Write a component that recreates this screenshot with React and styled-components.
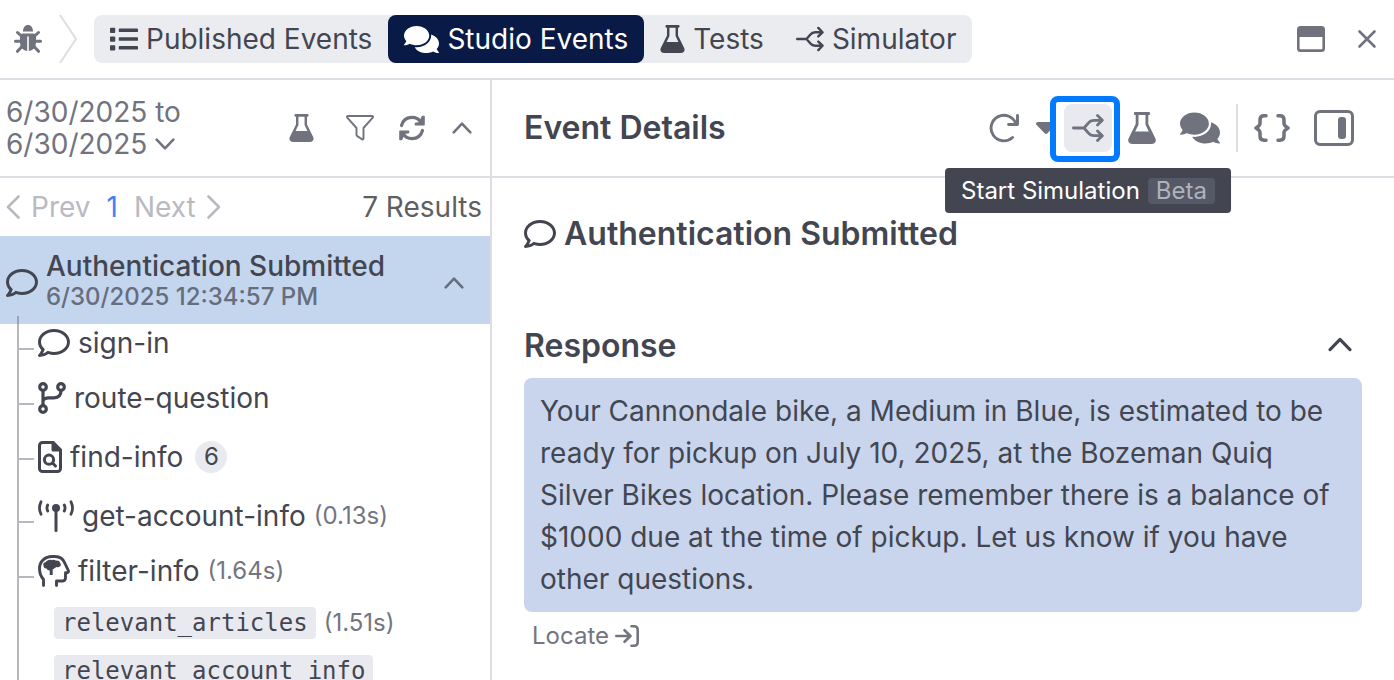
import React, { useState } from 'react';
import styled, { createGlobalStyle } from 'styled-components';
import { FaComments, FaList, FaRegComment } from 'react-icons/fa';

const GlobalStyle = createGlobalStyle`
  * {
    box-sizing: border-box;
  }
  body {
    margin: 0;
    background: #ffffff;
    color: #434651;
    font-family: Inter, "Liberation Sans", sans-serif;
    font-size: 28px;
    line-height: 32px;
  }
  button {
    font: inherit;
    color: inherit;
    background: none;
    border: none;
    padding: 0;
    margin: 0;
    cursor: pointer;
  }
  svg {
    display: block;
    flex: none;
  }
  h1, h2, h3, p, ul {
    margin: 0;
    padding: 0;
  }
`;

const Page = styled.div`
  display: flex;
  flex-direction: column;
  height: 100vh;
  overflow: hidden;
`;

const TopBar = styled.header`
  display: flex;
  align-items: center;
  flex: none;
  height: 80px;
  padding: 0 17px 0 14px;
  border-bottom: 2px solid #dddde3;
  color: #70737e;
`;

const Tabs = styled.nav`
  display: flex;
  margin-left: 16px;
  background: #ebecf0;
  border-radius: 8px;
`;

const Tab = styled.button`
  display: flex;
  align-items: center;
  gap: 8px;
  height: 48px;
  padding: 0 16px;
  border-radius: 8px;
  white-space: nowrap;
  && {
    color: ${({ $active }) => ($active ? '#ffffff' : '#434651')};
    background: ${({ $active }) => ($active ? '#0a1a46' : 'transparent')};
  }
`;

const WindowActions = styled.div`
  display: flex;
  align-items: center;
  gap: 32px;
  margin-left: auto;
`;

const Main = styled.main`
  display: flex;
  flex: 1;
  min-height: 0;
`;

const Sidebar = styled.aside`
  flex: none;
  width: 492px;
  border-right: 2px solid #dddde3;
  overflow: hidden;
`;

const FilterBar = styled.div`
  display: flex;
  align-items: center;
  height: 98px;
  padding: 0 16px 0 6px;
  border-bottom: 2px solid #dddde3;
  color: #70737e;
`;

const DateRange = styled.button`
  width: 200px;
  text-align: left;
  svg {
    display: inline-block;
    margin-bottom: 4px;
    vertical-align: middle;
  }
`;

const FilterActions = styled.div`
  display: flex;
  align-items: center;
  gap: 24px;
  margin-left: auto;
  button:first-child {
    margin-right: 8px;
  }
  button:last-child {
    padding: 0 2px;
  }
`;

const Pager = styled.div`
  display: flex;
  align-items: center;
  gap: 16px;
  height: 58px;
  padding: 0 8px 0 6px;
  color: #b9bac1;
`;

const PageButton = styled.button`
  display: flex;
  align-items: center;
  gap: 11px;
`;

const CurrentPage = styled.span`
  color: #4a7df8;
`;

const Results = styled.span`
  margin-left: auto;
  color: #5f5f62;
`;

const EventRow = styled.div`
  display: flex;
  align-items: center;
  gap: 8px;
  height: 88px;
  padding: 2px 26px 0 6px;
  background: #c4d6ee;
  > button {
    margin: 4px 0 0 auto;
    color: #666d7b;
  }
  > svg {
    margin-top: 4px;
  }
`;

const EventName = styled.div`
  font-weight: 500;
`;

const EventTime = styled.div`
  font-size: 24px;
  font-weight: 500;
  line-height: 30px;
  color: #666d7b;
`;

const Tree = styled.ul`
  position: relative;
  margin: -8px 0 0 17px;
  list-style: none;
`;

const TreeItem = styled.li`
  display: flex;
  align-items: flex-start;
  padding-bottom: 1px;
  border-left: 2px solid rgba(120, 119, 132, 0.53);
  &::before {
    content: '';
    flex: none;
    width: 15px;
    height: 2px;
    margin: 32px 4px 0 0;
    background: #b8b7bf;
  }
`;

const Step = styled.div`
  display: flex;
  align-items: center;
  gap: 8px;
  height: ${({ $tall }) => ($tall ? 62 : 54)}px;
`;

const Duration = styled.span`
  font-size: 24px;
  color: #73757f;
`;

const Count = styled.span`
  display: flex;
  align-items: center;
  justify-content: center;
  width: 32px;
  height: 32px;
  margin-left: 4px;
  border-radius: 50%;
  background: #e9eaef;
  font-size: 24px;
`;

const Variables = styled.ul`
  display: flex;
  flex-direction: column;
  gap: 16px;
  padding: 9px 0 0 16px;
  list-style: none;
`;

const Variable = styled.li`
  display: flex;
  align-items: center;
  gap: 8px;
  code {
    height: 32px;
    padding: 0 8px;
    border-radius: 4px;
    background: #e9eaef;
    font-family: "DejaVu Sans Mono", monospace;
    font-size: 24px;
  }
`;

const Details = styled.section`
  flex: 1;
  min-width: 0;
`;

const DetailsBar = styled.div`
  display: flex;
  align-items: center;
  height: 98px;
  padding: 0 40px 0 32px;
  border-bottom: 2px solid #dddde3;
`;

const Title = styled.h1`
  font-size: 32px;
  font-weight: 600;
  line-height: 40px;
`;

const Tools = styled.div`
  display: flex;
  align-items: center;
  height: 48px;
  margin-left: auto;
  color: #70737e;
`;

const ToolButton = styled.button`
  display: flex;
  margin-left: ${({ $space }) => $space || 24}px;
`;

const SimulateSlot = styled.div`
  position: relative;
  margin-left: 8px;
`;

const Ring = styled.span`
  position: absolute;
  top: -8px;
  right: -8px;
  bottom: -10px;
  left: -14px;
  border: 6px solid #007bff;
  border-radius: 8px;
  background: #ffffff;
`;

const SimulateButton = styled.button`
  position: relative;
  display: flex;
  align-items: center;
  justify-content: center;
  width: 48px;
  height: 48px;
  && {
    background: #e9eaef;
  }
  border-radius: 8px;
`;

const Tooltip = styled.div`
  position: absolute;
  top: 64px;
  left: 50%;
  transform: translateX(-50%);
  display: flex;
  align-items: center;
  gap: 8px;
  height: 45px;
  padding: 0 16px;
  border-radius: 4px;
  background: #434651;
  color: #ffffff;
  font-size: 24px;
  white-space: nowrap;
  z-index: 1;
`;

const Beta = styled.span`
  padding: 0 8px;
  border-radius: 4px;
  background: #555866;
  color: #b0b1b9;
  line-height: 26px;
`;

const Divider = styled.span`
  width: 2px;
  height: 48px;
  margin-left: 16px;
  background: #dddde3;
`;

const DetailsBody = styled.div`
  padding: 36px 32px;
`;

const Heading = styled.h2`
  display: flex;
  align-items: center;
  gap: 8px;
  font-size: 32px;
  font-weight: 600;
  line-height: 40px;
`;

const SectionHead = styled.div`
  display: flex;
  align-items: center;
  justify-content: space-between;
  margin-top: 72px;
  padding-right: 10px;
  > button {
    margin-bottom: 4px;
  }
`;

const Message = styled.p`
  margin: 12px 0 8px;
  padding: 12px 16px;
  border-radius: 8px;
  background: #c8d5ec;
  line-height: 42px;
`;

const Locate = styled.button`
  && {
    display: flex;
    align-items: center;
    gap: 6px;
    padding-left: 8px;
    color: #73757f;
    font-size: 24px;
  }
`;

const chevrons = {
  up: { box: '0 0 20 14', d: 'M1.700 11.300L10 2.700L18.300 11.300' },
  down: { box: '0 0 20 14', d: 'M1.700 2.700L10 11.300L18.300 2.700' },
  left: { box: '0 0 14 24', d: 'M12.500 1.500L2 12L12.500 22.500' },
  right: { box: '0 0 14 24', d: 'M1.500 1.500L12 12L1.500 22.500' },
};

const Chevron = ({ dir = 'up', width = 20 }) => {
  const side = dir === 'left' || dir === 'right';
  return (
    <svg width={side ? 14 : width} height={side ? 24 : Math.round(width * 0.7)} viewBox={chevrons[dir].box} fill="none" stroke="currentColor" strokeWidth="2.600" strokeLinecap="round" strokeLinejoin="round">
      <path d={chevrons[dir].d} />
    </svg>
  );
};

const Bug = () => (
  <svg width="28" height="28" viewBox="0 0 28 28" fill="none" stroke="currentColor" strokeWidth="3" strokeLinecap="round">
    <path fill="currentColor" stroke="none" d="M9 6.500C9 2.500 11 0 14 0s5 2.500 5 6.500z" />
    <path fill="currentColor" stroke="none" fillRule="evenodd" d="M9 8.500h10a3 3 0 0 1 3 3V18a8 8 0 0 1-7.200 8V11.500h-1.600V26A8 8 0 0 1 6 18v-6.500a3 3 0 0 1 3-3z" />
    <path d="M1.500 16.200H7M21 16.200H26.500M3.500 7.500L8 11.500M24.500 7.500L20 11.500M3.500 26.300L8 21.500M24.500 26.300L20 21.500" />
  </svg>
);

const BugDivider = () => (
  <svg width="20" height="50" viewBox="0 0 20 50" fill="none" stroke="#dddde3" strokeWidth="2">
    <path d="M2 1 L18 25 L2 49" />
  </svg>
);

const Crumb = styled.div`
  display: flex;
  align-items: center;
  gap: 16px;
`;

const Flask = ({ width = 28, height = 32 }) => (
  <svg width={width} height={height} viewBox="0 0 28 32">
    <path fill="currentColor" fillRule="evenodd" d="M7.200 0h13.600c.8 0 1.200.5 1.200 1.200v.7c0 .7-.4 1.100-1.200 1.100H20.300v9l6.900 13.900c1.700 3.200-.2 6.100-3.700 6.100H4.500c-3.500 0-5.400-2.900-3.700-6.100L7.700 12V3h-.5C6.400 3 6 2.600 6 1.900v-.7C6 .5 6.400 0 7.200 0zM10.500 3v9.700L7.200 19.500h13.600L17.500 12.700V3z" />
  </svg>
);

const Split = ({ size = 32 }) => (
  <svg width={size} height={size} viewBox="0 0 32 32" fill="none" stroke="currentColor" strokeWidth="2.800" strokeLinecap="round" strokeLinejoin="round">
    <path d="M1.400 16H12L16.500 10.800Q18.500 8.300 22 8.300H30M12 16L16.500 21.200Q18.500 23.700 22 23.700H30M25.500 3.400L30.300 8.300L25.500 13.100M25.500 18.900L30.300 23.700L25.500 28.600" />
  </svg>
);

const WindowIcon = () => (
  <svg width="28" height="26" viewBox="0 0 28 26">
    <path fill="currentColor" fillRule="evenodd" d="M3.500 0h21A3.500 3.500 0 0 1 28 3.500v19a3.500 3.500 0 0 1-3.500 3.500h-21A3.500 3.500 0 0 1 0 22.500v-19A3.500 3.500 0 0 1 3.500 0zM2.600 11v11.300c0 .6.4 1 1 1h20.800c.6 0 1-.4 1-1V11z" />
  </svg>
);

const Close = () => (
  <svg width="20" height="20" viewBox="0 0 20 20" stroke="currentColor" strokeWidth="2.600" strokeLinecap="round">
    <path d="M2.500 2.500L17.500 17.500M17.500 2.500L2.500 17.500" />
  </svg>
);

const Funnel = () => (
  <svg width="28" height="28" viewBox="0 0 28 28" fill="none" stroke="currentColor" strokeWidth="1.900" strokeLinejoin="round">
    <path d="M2 2h24c1 0 1.400 1 .7 1.700L17.500 14v10.500c0 .9-.9 1.300-1.600.8l-4.600-3.200c-.5-.3-.8-.7-.8-1.300V14L1.300 3.700C.6 3 1 2 2 2z" />
  </svg>
);

const Sync = () => (
  <svg width="28" height="28" viewBox="0 0 28 28" fill="none" stroke="currentColor" strokeWidth="3.200" strokeLinecap="round" strokeLinejoin="round">
    <path d="M3.500 11.500C5 6.200 9 3.400 14 3.400C18 3.400 21.200 5.300 23 8.500M24.500 16.500C23 21.800 19 24.600 14 24.600C10 24.600 6.800 22.700 5 19.500" />
    <path fill="currentColor" strokeWidth="1.600" d="M26 2.500V10.800H17.500V9.500L21.500 8.800L24.500 2.500zM2 25.500V17.200H10.500V18.500L6.500 19.200L3.500 25.500z" />
  </svg>
);

const Redo = () => (
  <svg width="32" height="32" viewBox="0 0 32 32" fill="none" stroke="currentColor" strokeWidth="2.900" strokeLinecap="round" strokeLinejoin="round">
    <path d="M29.500 3.500V12.500H20.500M28 12A12.800 12.800 0 1 0 24.500 25.500" />
  </svg>
);

const Caret = () => (
  <svg width="20" height="12" viewBox="0 0 20 12">
    <path fill="currentColor" d="M1.800 0h16.400c1.600 0 2.300 1.900 1.200 3L11.400 11.200a2 2 0 0 1-2.800 0L.6 3C-.5 1.900.2 0 1.800 0z" />
  </svg>
);

const Braces = () => (
  <svg width="36" height="28" viewBox="0 0 36 28" fill="none" stroke="currentColor" strokeWidth="3.500" strokeLinecap="round" strokeLinejoin="round">
    <path d="M12 1.800H10C7.500 1.800 6 3.500 6 6V9.500C6 11 5.500 11.700 2 14C5.500 16.300 6 17 6 18.500V22C6 24.500 7.500 26.200 10 26.200H12M24 1.800H26C28.500 1.800 30 3.500 30 6V9.500C30 11 30.500 11.700 34 14C30.500 16.300 30 17 30 18.500V22C30 24.500 28.500 26.200 26 26.200H24" />
  </svg>
);

const SidePanel = () => (
  <svg width="40" height="36" viewBox="0 0 40 36">
    <rect x="1.500" y="1.500" width="37" height="33" rx="4.500" fill="none" stroke="currentColor" strokeWidth="3" />
    <rect x="24" y="7" width="8" height="22" rx="3" fill="currentColor" />
  </svg>
);

const Branch = () => (
  <svg width="28" height="32" viewBox="0 0 28 32" fill="none" stroke="currentColor" strokeWidth="3.200">
    <circle cx="5" cy="5" r="3.300" />
    <circle cx="23" cy="5" r="3.300" />
    <circle cx="5" cy="27" r="3.300" />
    <path d="M5 8.500V23.500M5 18.500C6 16.300 8 15.800 10.500 15.800H16C20.500 15.800 23 13 23 8.500" />
  </svg>
);

const FileSearch = () => (
  <svg width="24" height="32" viewBox="0 0 24 32" fill="none" stroke="currentColor" strokeWidth="3" strokeLinecap="round" strokeLinejoin="round">
    <path d="M4.500 1.500H15L22.500 9V27.500A3 3 0 0 1 19.500 30.500H4.500A3 3 0 0 1 1.500 27.500V4.500A3 3 0 0 1 4.500 1.500z" />
    <path d="M15 1.500V9H22.500z" fill="currentColor" />
    <circle cx="11" cy="18.700" r="4.600" />
    <path d="M14.500 22L17.500 25" />
  </svg>
);

const Antenna = () => (
  <svg width="36" height="32" viewBox="0 0 36 32" fill="none" stroke="currentColor" strokeWidth="2.800" strokeLinecap="round">
    <circle cx="18" cy="8" r="4" fill="currentColor" stroke="none" />
    <path strokeWidth="3" d="M18 9V30.500" />
    <path d="M9.700 5C8.700 7 8.700 9 9.700 11M26.300 5C27.300 7 27.300 9 26.300 11M3 1.800C1 5.900 1 10.100 3 14.200M33 1.800C35 5.900 35 10.100 33 14.200" />
  </svg>
);

const HeadBrain = () => (
  <svg width="32" height="32" viewBox="0 0 32 32" fill="none" stroke="currentColor" strokeWidth="2.900" strokeLinecap="round" strokeLinejoin="round">
    <path d="M5.500 30.500V24.500C2.800 21.500 1.500 18 1.500 13.500C1.500 6.500 7 1.500 14 1.500H17C22 1.500 25.500 4.200 27 8.500L30.300 15.500C30.800 16.700 30.200 17.700 29 17.700H27.500V23A3 3 0 0 1 24.500 26H18.500V30.500" />
    <path fill="currentColor" stroke="none" d="M14 5.200c1.400-.7 3-.5 4 .5 1.800-.5 3.500.4 4 2 1.300 1.100 1.200 2.900-.2 3.900-1 .8-2.300.8-3.300.3l-3.800 2.600V20h-3v-4.500c-1.500 0-2.700-.8-3.200-2-1.800.2-3.200-1.200-3-2.900C4.700 8.800 5.800 7.200 7.700 7 8.500 5.300 12 4 14 5.200z" />
  </svg>
);

const LocateIcon = () => (
  <svg width="24" height="22" viewBox="0 0 24 22" fill="none" stroke="currentColor" strokeWidth="2.600" strokeLinecap="round" strokeLinejoin="round">
    <path d="M1.300 11H15.500M9.500 5.200L15.500 11L9.500 16.800M16.500 1.300H19.500A3.200 3.200 0 0 1 22.700 4.500V17.500A3.200 3.200 0 0 1 19.500 20.700H16.500" />
  </svg>
);

const tabs = [
  { name: 'Published Events', icon: <FaList size={28} /> },
  { name: 'Studio Events', icon: <FaComments size={35} /> },
  { name: 'Tests', icon: <Flask width={25} height={28} /> },
  { name: 'Simulator', icon: <Split size={28} /> },
];

const steps = [
  { name: 'sign-in', icon: <FaRegComment size={32} /> },
  { name: 'route-question', icon: <Branch /> },
  { name: 'find-info', icon: <FileSearch />, count: 6 },
  { name: 'get-account-info', icon: <Antenna />, time: '0.13s' },
  {
    name: 'filter-info',
    icon: <HeadBrain />,
    time: '1.64s',
    variables: [{ name: 'relevant_articles', time: '1.51s' }, { name: 'relevant_account_info' }],
  },
];

const EventList = () => (
  <Sidebar>
    <FilterBar>
      <DateRange>
        6/30/2025 to 6/30/2025 <Chevron dir="down" />
      </DateRange>
      <FilterActions>
        <button aria-label="Test"><Flask width={25} height={28} /></button>
        <button aria-label="Filter"><Funnel /></button>
        <button aria-label="Refresh"><Sync /></button>
        <button aria-label="Collapse all"><Chevron /></button>
      </FilterActions>
    </FilterBar>
    <Pager>
      <PageButton><Chevron dir="left" />Prev</PageButton>
      <CurrentPage>1</CurrentPage>
      <PageButton>Next<Chevron dir="right" /></PageButton>
      <Results>7 Results</Results>
    </Pager>
    <EventRow>
      <FaRegComment size={32} />
      <div>
        <EventName>Authentication Submitted</EventName>
        <EventTime>6/30/2025 12:34:57 PM</EventTime>
      </div>
      <button aria-label="Collapse event"><Chevron /></button>
    </EventRow>
    <Tree>
      {steps.map((step) => (
        <TreeItem key={step.name}>
          <div>
            <Step $tall={step.count}>
              {step.icon}
              <span>{step.name}</span>
              {step.count && <Count>{step.count}</Count>}
              {step.time && <Duration>({step.time})</Duration>}
            </Step>
            {step.variables && (
              <Variables>
                {step.variables.map((item) => (
                  <Variable key={item.name}>
                    <code>{item.name}</code>
                    {item.time && <Duration>({item.time})</Duration>}
                  </Variable>
                ))}
              </Variables>
            )}
          </div>
        </TreeItem>
      ))}
    </Tree>
  </Sidebar>
);

const EventDetails = () => {
  const [open, setOpen] = useState(true);

  return (
    <Details>
      <DetailsBar>
        <Title>Event Details</Title>
        <Tools>
          <ToolButton aria-label="Replay"><Redo /></ToolButton>
          <ToolButton aria-label="Replay options" $space={16}><Caret /></ToolButton>
          <SimulateSlot>
            <Ring />
            <SimulateButton aria-label="Start Simulation"><Split /></SimulateButton>
            <Tooltip role="tooltip">Start Simulation <Beta>Beta</Beta></Tooltip>
          </SimulateSlot>
          <ToolButton aria-label="Create test" $space={16}><Flask /></ToolButton>
          <ToolButton aria-label="Conversation"><FaComments size={40} /></ToolButton>
          <Divider />
          <ToolButton aria-label="View JSON" $space={16}><Braces /></ToolButton>
          <ToolButton aria-label="Toggle panel"><SidePanel /></ToolButton>
        </Tools>
      </DetailsBar>
      <DetailsBody>
        <Heading><FaRegComment size={32} />Authentication Submitted</Heading>
        <SectionHead>
          <Heading>Response</Heading>
          <button aria-label="Toggle response" onClick={() => setOpen(!open)}>
            <Chevron dir={open ? 'up' : 'down'} width={24} />
          </button>
        </SectionHead>
        {open && (
          <Message>
            Your Cannondale bike, a Medium in Blue, is estimated to be ready for pickup on July 10, 2025, at the Bozeman Quiq Silver Bikes location. Please remember there is a balance of $1000 due at the time of pickup. Let us know if you have other questions.
          </Message>
        )}
        <Locate>Locate <LocateIcon /></Locate>
      </DetailsBody>
    </Details>
  );
};

const App = () => {
  const [active, setActive] = useState('Studio Events');

  return (
    <Page>
      <GlobalStyle />
      <TopBar>
        <Crumb>
          <Bug />
          <BugDivider />
        </Crumb>
        <Tabs>
          {tabs.map(({ name, icon }) => (
            <Tab key={name} $active={active === name} onClick={() => setActive(name)}>
              {icon}
              {name}
            </Tab>
          ))}
        </Tabs>
        <WindowActions>
          <button aria-label="Window"><WindowIcon /></button>
          <button aria-label="Close"><Close /></button>
        </WindowActions>
      </TopBar>
      <Main>
        <EventList />
        <EventDetails />
      </Main>
    </Page>
  );
};

export default App;
